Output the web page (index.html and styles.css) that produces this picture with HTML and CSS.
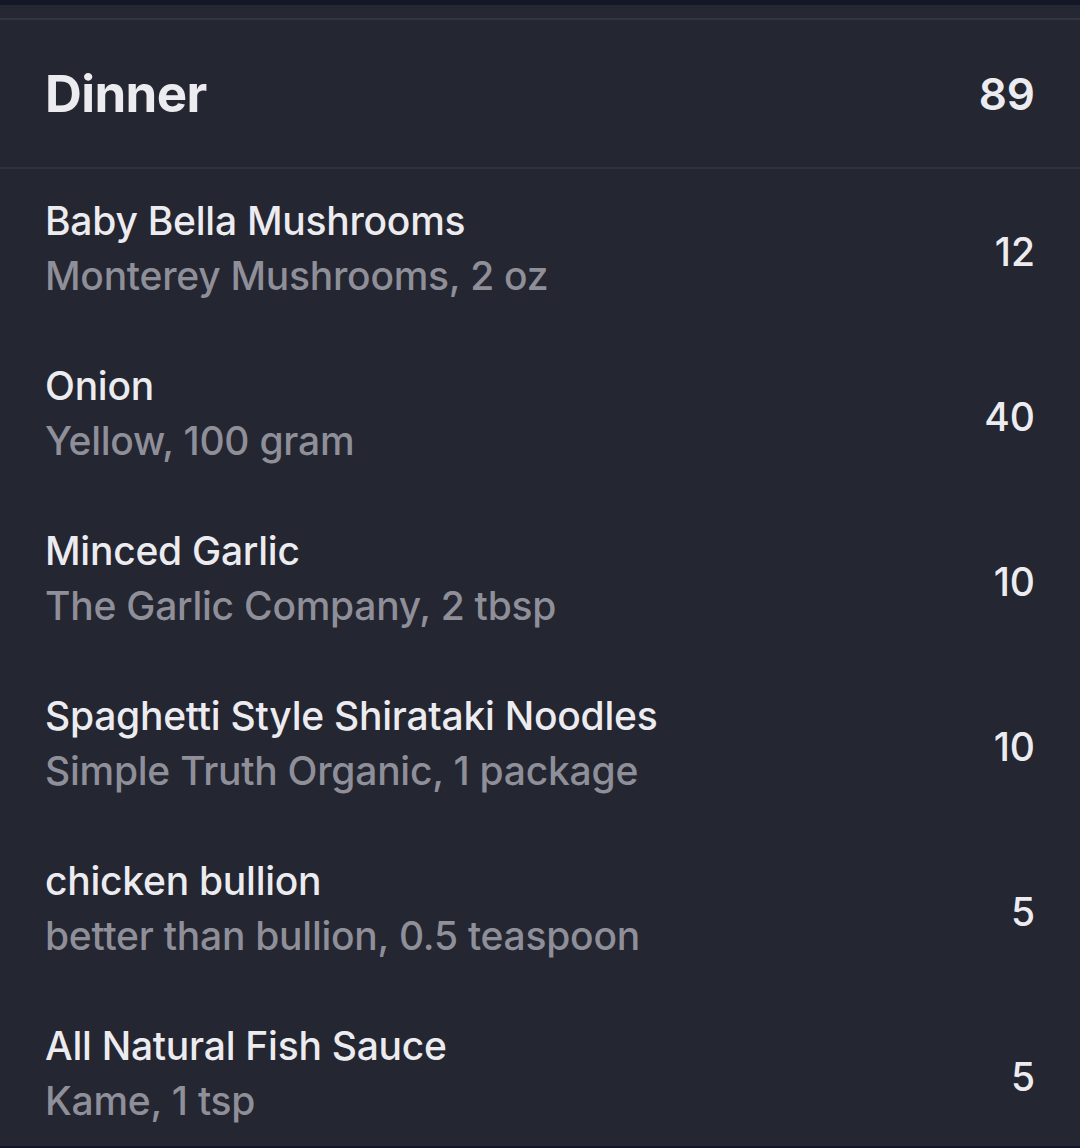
FILE: index.html
```html
<!DOCTYPE html>
<html>
<head>
<meta charset="utf-8">
<link rel="stylesheet" href="styles.css">
</head>
<body>
<div class="screen">
  <div class="topbar"></div>
  <div class="gap"></div>
  <section class="meal">
    <header class="meal-head">
      <h1 class="meal-title">Dinner</h1>
      <span class="meal-total">89</span>
    </header>
    <ul class="items">
      <li class="item">
        <div class="item-text"><div class="item-name">Baby Bella Mushrooms</div><div class="item-sub">Monterey Mushrooms, 2 oz</div></div>
        <span class="item-val">12</span>
      </li>
      <li class="item">
        <div class="item-text"><div class="item-name">Onion</div><div class="item-sub">Yellow, 100 gram</div></div>
        <span class="item-val">40</span>
      </li>
      <li class="item">
        <div class="item-text"><div class="item-name">Minced Garlic</div><div class="item-sub">The Garlic Company, 2 tbsp</div></div>
        <span class="item-val">10</span>
      </li>
      <li class="item">
        <div class="item-text"><div class="item-name">Spaghetti Style Shirataki Noodles</div><div class="item-sub">Simple Truth Organic, 1 package</div></div>
        <span class="item-val">10</span>
      </li>
      <li class="item">
        <div class="item-text"><div class="item-name">chicken bullion</div><div class="item-sub">better than bullion, 0.5 teaspoon</div></div>
        <span class="item-val">5</span>
      </li>
      <li class="item">
        <div class="item-text"><div class="item-name">All Natural Fish Sauce</div><div class="item-sub">Kame, 1 tsp</div></div>
        <span class="item-val">5</span>
      </li>
    </ul>
  </section>
  <div class="bottombar"></div>
</div>
</body>
</html>
```

FILE: styles.css
```css
* { box-sizing: border-box; }
html, body { margin: 0; padding: 0; }
body {
  background: #242631;
  font-family: Inter, "Noto Sans", sans-serif;
  color: #ececf0;
}
.screen {
  position: relative;
  width: 1080px;
  height: 1148px;
  display: flex;
  flex-direction: column;
  background: #242631;
  overflow: hidden;
}
.screen > * { flex-shrink: 0; }
.topbar { height: 5px; background: #141727; }
.gap { height: 15px; background: #252732; border-bottom: 2px solid #33353f; }
.meal { display: flex; flex-direction: column; }
.meal-head {
  height: 149px;
  display: flex;
  align-items: center;
  justify-content: space-between;
  padding: 0 45px 0 45px;
  border-bottom: 2px solid #30323c;
}
.meal-title {
  margin: 0;
  font-size: 51px;
  font-weight: 700;
  letter-spacing: -0.6px;
  color: #ececf0;
}
.meal-total {
  font-size: 44px;
  font-weight: 600;
  color: #ececf0;
}
.items { list-style: none; margin: 0; padding: 0; }
.item {
  height: 165px;
  display: flex;
  align-items: center;
  justify-content: space-between;
  padding: 0 45px 0 45px;
}
.item-text { display: flex; flex-direction: column; margin-bottom: 8px; }
.item-name, .item-sub {
  font-size: 39px;
  line-height: 55px;
  font-weight: 500;
  letter-spacing: -0.25px;
}
.item-name { color: #ececf0; }
.item-sub { color: #8f8f99; }
.item-val {
  font-size: 39px;
  font-weight: 500;
  color: #ececf0;
}
.bottombar {
  position: absolute;
  left: 0;
  right: 0;
  bottom: 0;
  height: 2px;
  background: #141727;
}
```
